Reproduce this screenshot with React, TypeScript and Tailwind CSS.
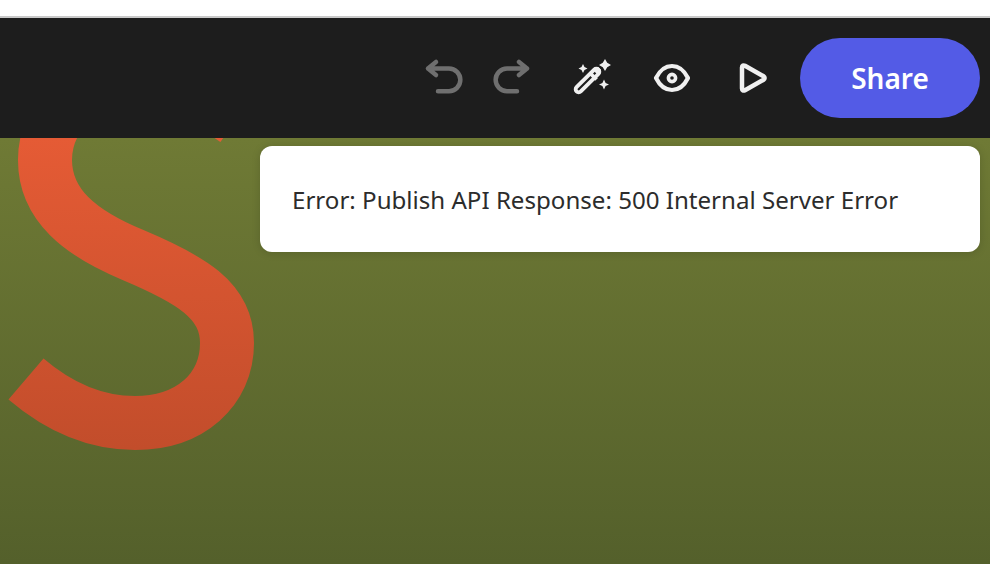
export default function App() {
  return (
    <div className="flex h-[564px] w-[990px] flex-col overflow-hidden bg-white" style={{ fontFamily: '"Noto Sans", sans-serif' }}>
      <div className="h-4 bg-white" />
      <div className="h-0.5 bg-[#c9c9c9]" />
      <header className="relative z-10 flex h-[120px] items-center justify-end bg-[#1d1d1d] pr-2.5">
        <svg width="40" height="40" viewBox="0 0 40 40" fill="none" stroke="#6f6f6f" strokeWidth="4.5" strokeLinecap="round" strokeLinejoin="round">
          <path d="M12 4L4 10.5L12 17M4 10.5H25A11.2 11.2 0 0 1 25 33.2H14" />
        </svg>
        <svg className="ml-7" width="40" height="40" viewBox="0 0 40 40" fill="none" stroke="#6f6f6f" strokeWidth="4.5" strokeLinecap="round" strokeLinejoin="round">
          <path d="M27 4L35 10.5L27 17M35 10.5H15A11.2 11.2 0 0 0 15 33.2H25" />
        </svg>
        <svg className="ml-10" width="40" height="40" viewBox="0 0 40 40" fill="none">
          <g stroke="#f0f0f0" strokeWidth="3.8" strokeLinejoin="round">
            <rect x="-3" y="-15.5" width="6" height="31" rx="3" transform="translate(15.5 22.5) rotate(45)" />
            <path d="M18.5 15.5L24.5 21.5" />
          </g>
          <path d="M24 11L27 14" stroke="#f0f0f0" strokeWidth="6" />
          <g fill="#f0f0f0">
            <path d="M33 1L35.2 4.8L39 7L35.2 9.2L33 13L30.8 9.2L27 7L30.8 4.8Z" />
            <path d="M11 6L12.5 9L15.5 10.5L12.5 12L11 15L9.5 12L6.5 10.5L9.5 9Z" />
            <path d="M32 21.5L33.6 24.9L37 26.5L33.6 28.1L32 31.5L30.4 28.1L27 26.5L30.4 24.9Z" />
          </g>
        </svg>
        <svg className="ml-10" width="40" height="40" viewBox="0 0 40 40" fill="none" stroke="#f0f0f0" strokeWidth="4.2" strokeLinejoin="round">
          <path d="M4 20C8 12 14 8 20 8C26 8 32 12 36 20C32 28 26 32 20 32C14 32 8 28 4 20Z" />
          <circle cx="20" cy="20" r="3.6" strokeWidth="3.6" />
        </svg>
        <svg className="ml-10" width="40" height="40" viewBox="0 0 40 40" fill="none" stroke="#f0f0f0" strokeWidth="4.5" strokeLinejoin="round">
          <path d="M10 9.5C10 7.5 11.5 7 13 7.8L31.5 18.2C33 19.2 33 20.8 31.5 21.8L13 32.2C11.5 33 10 32.5 10 30.5Z" />
        </svg>
        <button className="ml-7 flex h-20 w-[180px] items-center justify-center rounded-full bg-[#535be6] text-[28px] font-semibold text-white">
          Share
        </button>
      </header>
      <main className="relative flex flex-1 items-start justify-end bg-gradient-to-b from-[#6f7a35] to-[#54602b] pr-2.5 pt-2">
        <svg className="absolute left-0 top-0" width="300" height="330" viewBox="0 138 300 330" fill="none">
          <defs>
            <linearGradient id="s" gradientUnits="userSpaceOnUse" x1="0" y1="138" x2="0" y2="450">
              <stop offset="0" stopColor="#e55b35" />
              <stop offset="1" stopColor="#c24d2b" />
            </linearGradient>
          </defs>
          <path d="M26 379C60 408 95 423 135 423C190 423 227 390 227 343C227 300 190 279 133 255C80 233 45 205 45 160C45 110 90 80 135 80C170 80 205 98 236 120" stroke="url(#s)" strokeWidth="54" />
        </svg>
        <div className="relative flex h-[106px] w-[720px] items-center rounded-xl bg-white pl-8 pt-0.5 text-[24.1px] text-[#2c2c2c] shadow-[0_1px_8px_rgba(0,0,0,0.15)]">
          Error: Publish API Response: 500 Internal Server Error
        </div>
      </main>
    </div>
  );
}
